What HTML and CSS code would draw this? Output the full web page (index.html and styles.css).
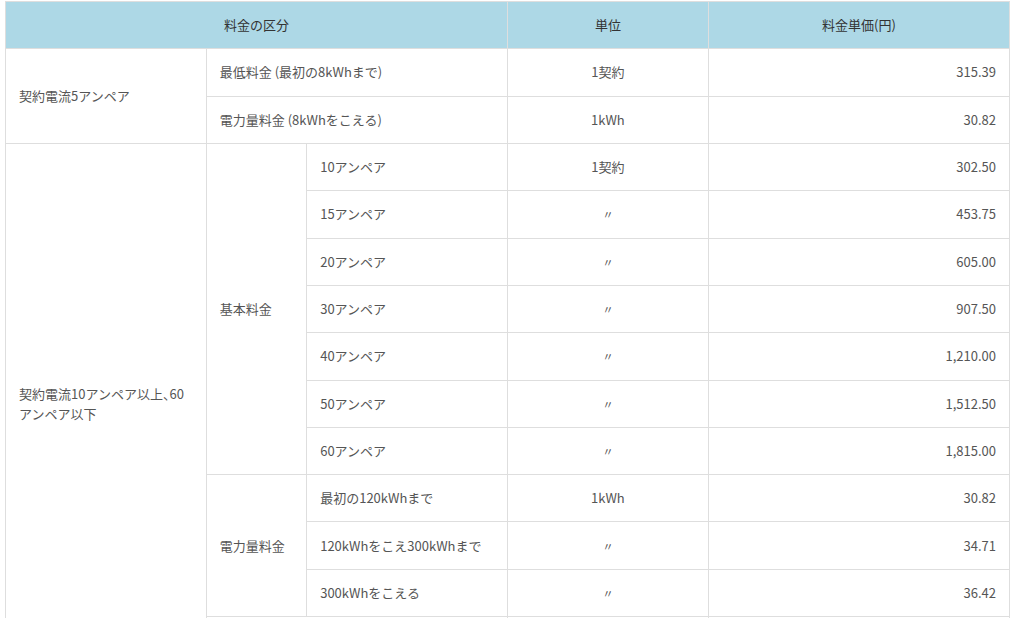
FILE: index.html
```html
<!DOCTYPE html>
<html lang="ja">
<head>
<meta charset="utf-8">
<title>料金表</title>
<link rel="stylesheet" href="styles.css">
</head>
<body>
<table class="rate">
  <colgroup>
    <col class="c1"><col class="c2"><col class="c3"><col class="c4"><col class="c5">
  </colgroup>
  <thead>
    <tr>
      <th colspan="3">料金の区分</th>
      <th>単位</th>
      <th>料金単価(円)</th>
    </tr>
  </thead>
  <tbody>
    <tr>
      <td rowspan="2">契約電流5アンペア</td>
      <td colspan="2">最低料金 (最初の8kWhまで)</td>
      <td class="ctr">1契約</td>
      <td class="num">315.39</td>
    </tr>
    <tr>
      <td colspan="2">電力量料金 (8kWhをこえる)</td>
      <td class="ctr">1kWh</td>
      <td class="num">30.82</td>
    </tr>
    <tr>
      <td rowspan="11" class="halt">契約電流10アンペア以上、60アンペア以下</td>
      <td rowspan="7">基本料金</td>
      <td>10アンペア</td>
      <td class="ctr">1契約</td>
      <td class="num">302.50</td>
    </tr>
    <tr><td>15アンペア</td><td class="ctr ditto">〃</td><td class="num">453.75</td></tr>
    <tr><td>20アンペア</td><td class="ctr ditto">〃</td><td class="num">605.00</td></tr>
    <tr><td>30アンペア</td><td class="ctr ditto">〃</td><td class="num">907.50</td></tr>
    <tr><td>40アンペア</td><td class="ctr ditto">〃</td><td class="num">1,210.00</td></tr>
    <tr><td>50アンペア</td><td class="ctr ditto">〃</td><td class="num">1,512.50</td></tr>
    <tr><td>60アンペア</td><td class="ctr ditto">〃</td><td class="num">1,815.00</td></tr>
    <tr>
      <td rowspan="3">電力量料金</td>
      <td>最初の120kWhまで</td>
      <td class="ctr">1kWh</td>
      <td class="num">30.82</td>
    </tr>
    <tr><td>120kWhをこえ300kWhまで</td><td class="ctr ditto">〃</td><td class="num">34.71</td></tr>
    <tr><td>300kWhをこえる</td><td class="ctr ditto">〃</td><td class="num">36.42</td></tr>
    <tr>
      <td colspan="2">&nbsp;</td>
      <td>&nbsp;</td>
      <td>&nbsp;</td>
    </tr>
  </tbody>
</table>
</body>
</html>
```

FILE: styles.css
```css
html, body {
  margin: 0;
  padding: 0;
  background: #fff;
}

body {
  font-family: "Noto Sans CJK JP", "Noto Sans", sans-serif;
  font-size: 13px;
  color: #555;
}

.rate {
  border-collapse: collapse;
  width: 1005px;
  margin: 1px 0 0 5px;
  table-layout: fixed;
}

.c1 { width: 20%; }
.c2 { width: 10%; }
.c3 { width: 20%; }
.c4 { width: 20%; }
.c5 { width: 30%; }

.rate th,
.rate td {
  border: 1px solid #dedede;
  padding: 13.17px 13px;
  line-height: 20px;
  vertical-align: middle;
  text-align: left;
}

.rate th {
  background: #add8e6;
  color: #333;
  font-weight: normal;
  text-align: center;
}

.rate .ctr {
  text-align: center;
}

.rate .num {
  text-align: right;
}

.ditto {
  font-size: 11px;
}

.rate .halt {
  font-feature-settings: "halt";
}
```
